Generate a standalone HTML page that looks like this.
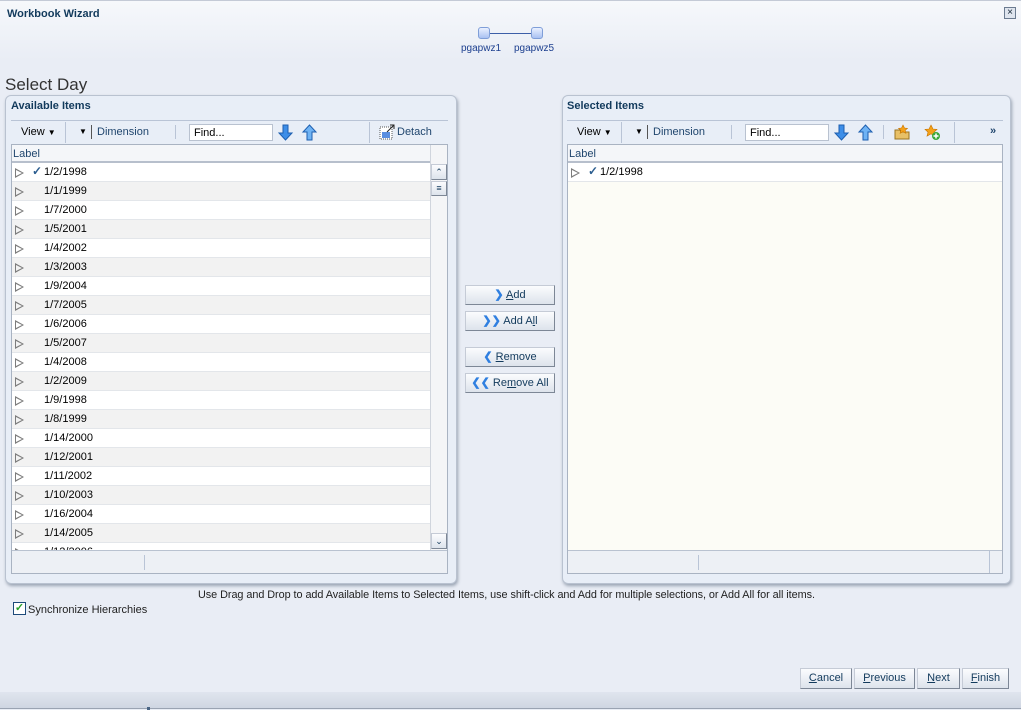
<!DOCTYPE html>
<html><head><style>
*{box-sizing:border-box;margin:0;padding:0}
body{width:1021px;height:710px;overflow:hidden;background:#e9edf5;font-family:"Liberation Sans",Tahoma,sans-serif;font-size:11px;color:#000;position:relative}
.abs{position:absolute}
.top{left:0;top:0;width:1021px;height:60px;background:linear-gradient(#f6f8fb,#e9edf5);border-top:1px solid #c4cad6}
.title{left:7px;top:8px;font-weight:bold;font-size:11px;color:#123a5c}
.close{left:1004px;top:7px;width:12px;height:12px;border:1px solid #6b7b90;background:#dfe5ee;font-size:10px;line-height:9px;text-align:center;color:#123}
.node{width:12px;height:12px;border:1px solid #7f9ed8;border-radius:3px;background:linear-gradient(#e9f0ff,#a9c1f2)}
.tl{color:#1c3f8f;font-size:10px}
.panel{border:1px solid #b9c2d0;border-radius:6px;background:#e8eef7;box-shadow:1px 2px 3px #9aa4b3}
.ph{font-weight:bold;color:#123a5c;font-size:11px}
.tb{height:23px;border-top:1px solid #b9c4d6}
.lnk{color:#20466e}
.find{width:84px;height:17px;border:1px solid #b9c2d0;background:#fff;padding:2px 4px;font-size:11px}
.sep{width:1px;background:#b9c4d6}
.table{border:1px solid #a9b3c2;background:#fff;overflow:hidden}
.hdr{height:18px;border-bottom:2px solid #b7bfcc;background:#f4f6f9;color:#20466e;padding:3px 1px 0}
.row{height:19px;border-bottom:1px solid #e3e6ea;position:relative;font-size:11px}
.row span{position:absolute;left:32px;top:3px}
.row i{position:absolute;left:3px;top:5px;width:0;height:0;border-left:9px solid #7c7c7c;border-top:5px solid transparent;border-bottom:5px solid transparent}
.row i:after{content:"";position:absolute;left:-8px;top:-3px;border-left:6px solid #fff;border-top:3px solid transparent;border-bottom:3px solid transparent}
.row.g i:after{border-left-color:#f2f2f2}
.row.g{background:#f2f2f2}
.ck{position:absolute;left:20px;top:1px;color:#2b5d8f;font-size:12px}
.btn{height:20px;border:1px solid #7d8796;border-top-color:#c5cbd6;border-left-color:#c5cbd6;background:linear-gradient(#fbfcfe,#dde3ec);color:#123a5c;text-align:center;line-height:18px;font-size:11px}
.foot{background:#edf0f5;border-top:1px solid #b9c2d0}
</style></head><body>
<div class="abs top"></div>
<div class="abs title">Workbook Wizard</div>
<div class="abs close">×</div>
<div class="abs node" style="left:478px;top:27px"></div>
<div class="abs" style="left:490px;top:33px;width:42px;height:1px;background:#3d5fa8"></div>
<div class="abs node" style="left:531px;top:27px"></div>
<div class="abs tl" style="left:461px;top:43px">pgapwz1</div>
<div class="abs tl" style="left:514px;top:43px">pgapwz5</div>
<div class="abs" style="left:5px;top:75px;font-size:17px;color:#333">Select Day</div>

<div class="abs panel" style="left:5px;top:95px;width:452px;height:489px"></div>
<div class="abs ph" style="left:11px;top:100px">Available Items</div>
<div class="abs tb" style="left:11px;top:120px;width:437px"></div>
<div class="abs" style="left:21px;top:126px">View <span style="font-size:8px">▼</span></div>
<div class="abs sep" style="left:65px;top:122px;height:21px"></div>
<div class="abs" style="left:79px;top:127px;font-size:8px">▼</div>
<div class="abs sep" style="left:91px;top:125px;height:14px;background:#555"></div>
<div class="abs lnk" style="left:97px;top:126px">Dimension</div>
<div class="abs sep" style="left:175px;top:125px;height:14px"></div>
<div class="abs find" style="left:189px;top:124px">Find...</div>
<svg class="abs" style="left:278px;top:124px" width="40" height="17"><path d="M5 1h5v8h4l-6.5 7L1 9h4z" fill="#3d8ee8" stroke="#1d5fb0"/><path d="M29 16h5V8h4l-6.5-7L25 8h4z" fill="#6fb3f4" stroke="#1d5fb0"/></svg>
<div class="abs sep" style="left:369px;top:122px;height:21px"></div>
<svg class="abs" style="left:379px;top:124px" width="16" height="16"><rect x="1" y="3" width="12" height="12" fill="#fff" stroke="#555" stroke-dasharray="1 1"/><rect x="3" y="8" width="8" height="6" fill="#5a8ee0"/><path d="M8 8l7-7M11 1h4v4" stroke="#222" fill="none"/></svg>
<div class="abs lnk" style="left:397px;top:126px">Detach</div>

<div class="abs table" style="left:11px;top:144px;width:437px;height:430px">
<div class="hdr" style="width:419px">Label</div>
<div style="width:418px">
<div class="row"><i></i><b class="ck">✓</b><span>1/2/1998</span></div>
<div class="row g"><i></i><span>1/1/1999</span></div>
<div class="row"><i></i><span>1/7/2000</span></div>
<div class="row g"><i></i><span>1/5/2001</span></div>
<div class="row"><i></i><span>1/4/2002</span></div>
<div class="row g"><i></i><span>1/3/2003</span></div>
<div class="row"><i></i><span>1/9/2004</span></div>
<div class="row g"><i></i><span>1/7/2005</span></div>
<div class="row"><i></i><span>1/6/2006</span></div>
<div class="row g"><i></i><span>1/5/2007</span></div>
<div class="row"><i></i><span>1/4/2008</span></div>
<div class="row g"><i></i><span>1/2/2009</span></div>
<div class="row"><i></i><span>1/9/1998</span></div>
<div class="row g"><i></i><span>1/8/1999</span></div>
<div class="row"><i></i><span>1/14/2000</span></div>
<div class="row g"><i></i><span>1/12/2001</span></div>
<div class="row"><i></i><span>1/11/2002</span></div>
<div class="row g"><i></i><span>1/10/2003</span></div>
<div class="row"><i></i><span>1/16/2004</span></div>
<div class="row g"><i></i><span>1/14/2005</span></div>
<div class="row"><i></i><span>1/12/2006</span></div>
</div>
<div class="abs" style="left:418px;top:0;width:18px;height:406px;background:#f4f5f7;border-left:1px solid #d0d5dd"></div>
<div class="abs btn" style="left:419px;top:19px;width:16px;height:16px;line-height:14px;font-size:9px">⌃</div>
<div class="abs btn" style="left:419px;top:36px;width:16px;height:15px;line-height:12px;font-size:9px">≡</div>
<div class="abs btn" style="left:419px;top:388px;width:16px;height:16px;line-height:14px;font-size:9px">⌄</div>
<div class="abs foot" style="left:0;top:405px;width:437px;height:24px"><div class="abs sep" style="left:132px;top:4px;height:15px"></div></div>
</div>

<div class="abs btn" style="left:465px;top:285px;width:90px"><b style="color:#2f7fe0">❯</b> <u>A</u>dd</div>
<div class="abs btn" style="left:465px;top:311px;width:90px"><b style="color:#2f7fe0">❯❯</b> Add A<u>l</u>l</div>
<div class="abs btn" style="left:465px;top:347px;width:90px"><b style="color:#2f7fe0">❮</b> <u>R</u>emove</div>
<div class="abs btn" style="left:465px;top:373px;width:90px"><b style="color:#2f7fe0">❮❮</b> Re<u>m</u>ove All</div>

<div class="abs panel" style="left:562px;top:95px;width:449px;height:489px"></div>
<div class="abs ph" style="left:567px;top:100px">Selected Items</div>
<div class="abs tb" style="left:567px;top:120px;width:436px"></div>
<div class="abs" style="left:577px;top:126px">View <span style="font-size:8px">▼</span></div>
<div class="abs sep" style="left:621px;top:122px;height:21px"></div>
<div class="abs" style="left:635px;top:127px;font-size:8px">▼</div>
<div class="abs sep" style="left:647px;top:125px;height:14px;background:#555"></div>
<div class="abs lnk" style="left:653px;top:126px">Dimension</div>
<div class="abs sep" style="left:731px;top:125px;height:14px"></div>
<div class="abs find" style="left:745px;top:124px">Find...</div>
<svg class="abs" style="left:834px;top:124px" width="40" height="17"><path d="M5 1h5v8h4l-6.5 7L1 9h4z" fill="#3d8ee8" stroke="#1d5fb0"/><path d="M29 16h5V8h4l-6.5-7L25 8h4z" fill="#6fb3f4" stroke="#1d5fb0"/></svg>
<div class="abs sep" style="left:883px;top:125px;height:14px"></div>
<svg class="abs" style="left:893px;top:124px" width="50" height="17"><path d="M2 6h5l1 2h8v7H2z" fill="#e8c066" stroke="#9a7420"/><path d="M10 1l1.5 3 3 .3-2.3 2 .7 3-2.9-1.6-2.9 1.6.7-3-2.3-2 3-.3z" fill="#f4a21a" stroke="#c77400" stroke-width=".6"/><path d="M38 1l2 4 4 .4-3 2.7 1 4-4-2.2-4 2.2 1-4-3-2.7 4-.4z" fill="#f4a21a" stroke="#c77400" stroke-width=".6"/><circle cx="43" cy="12" r="4" fill="#3aa83a"/><path d="M43 9.5v5M40.5 12h5" stroke="#fff" stroke-width="1.5"/></svg>
<div class="abs sep" style="left:954px;top:122px;height:21px"></div>
<div class="abs" style="left:990px;top:125px;color:#20466e;font-weight:bold">»</div>

<div class="abs table" style="left:567px;top:144px;width:436px;height:430px;background:#fcfcf6">
<div class="hdr" style="width:434px">Label</div>
<div class="row" style="background:#fff;width:434px"><i></i><b class="ck">✓</b><span>1/2/1998</span></div>
<div class="abs foot" style="left:0;top:405px;width:436px;height:24px"><div class="abs sep" style="left:130px;top:4px;height:15px"></div><div class="abs sep" style="left:421px;top:0;height:24px"></div></div>
</div>

<div class="abs" style="left:198px;top:589px;color:#222;font-size:10.85px;letter-spacing:-0.05px">Use Drag and Drop to add Available Items to Selected Items, use shift-click and Add for multiple selections, or Add All for all items.</div>
<div class="abs" style="left:13px;top:602px;width:13px;height:13px;border:1px solid #1d4a7a;background:#fff;color:#2aa02a;font-size:11px;line-height:11px;text-align:center;font-weight:bold">✓</div>
<div class="abs" style="left:28px;top:604px;color:#222">Synchronize Hierarchies</div>

<div class="abs btn" style="left:800px;top:668px;width:52px;height:21px"><u>C</u>ancel</div>
<div class="abs btn" style="left:854px;top:668px;width:61px;height:21px"><u>P</u>revious</div>
<div class="abs btn" style="left:917px;top:668px;width:43px;height:21px"><u>N</u>ext</div>
<div class="abs btn" style="left:962px;top:668px;width:47px;height:21px"><u>F</u>inish</div>
<div class="abs" style="left:0;top:692px;width:1021px;height:17px;background:linear-gradient(#e0e5ee,#cfd6e2);border-bottom:1px solid #9aa3b2"></div>
<div class="abs" style="left:147px;top:707px;width:3px;height:3px;background:#4a6585"></div>
</body></html>
